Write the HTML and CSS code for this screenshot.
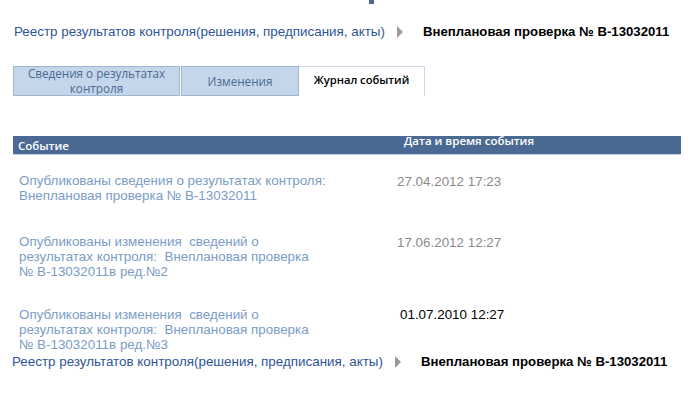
FILE: index.html
```html
<!DOCTYPE html>
<html lang="ru">
<head>
<meta charset="utf-8">
<link rel="stylesheet" href="styles.css">
</head>
<body>
<div class="topmark"></div>
<div class="crumbs crumbs-top">
  <span class="crumb-link">Реестр результатов контроля(решения, предписания, акты)</span>
  <svg class="crumb-arrow" width="6" height="12" viewBox="0 0 6 12"><path d="M0 0 L6 6 L0 12 Z" fill="#9a9a9a"/></svg>
  <span class="crumb-current">Внеплановая проверка № В-13032011</span>
</div>
<div class="tabs">
  <div class="tab tab-1">Сведения о результатах<br>контроля</div>
  <div class="tab tab-2">Изменения</div>
  <div class="tab tab-active">Журнал событий</div>
</div>
<div class="table">
  <div class="thead">
    <div class="th th-event">Событие</div>
    <div class="th th-date">Дата и время события</div>
  </div>
  <div class="row row-1">
    <div class="event">Опубликованы сведения о результатах контроля:<br>Внеплановая проверка № В-13032011</div>
    <div class="date">27.04.2012 17:23</div>
  </div>
  <div class="row row-2">
    <div class="event">Опубликованы изменения&nbsp; сведений о<br>результатах контроля:&nbsp; Внеплановая проверка<br>№ В-13032011в ред.№2</div>
    <div class="date">17.06.2012 12:27</div>
  </div>
  <div class="row row-3">
    <div class="event">Опубликованы изменения&nbsp; сведений о<br>результатах контроля:&nbsp; Внеплановая проверка<br>№ В-13032011в ред.№3</div>
    <div class="date date-dark">01.07.2010 12:27</div>
  </div>
</div>
<div class="crumbs crumbs-bottom">
  <span class="crumb-link">Реестр результатов контроля(решения, предписания, акты)</span>
  <svg class="crumb-arrow" width="6" height="12" viewBox="0 0 6 12"><path d="M0 0 L6 6 L0 12 Z" fill="#9a9a9a"/></svg>
  <span class="crumb-current">Внеплановая проверка № В-13032011</span>
</div>
</body>
</html>
```
FILE: styles.css
```css
html, body {
  margin: 0;
  padding: 0;
  background: #ffffff;
}
body {
  font-family: "Liberation Sans", Arial, sans-serif;
  font-size: 13.4px;
  width: 694px;
  height: 395px;
  overflow: hidden;
}
.topmark {
  width: 5px;
  height: 4px;
  margin-left: 369px;
  background: #4a6a94;
}
.crumbs {
  display: flex;
  align-items: center;
  height: 16px;
  line-height: 16px;
}
.crumbs-top {
  margin-top: 20px;
  padding-left: 14px;
}
.crumbs-bottom {
  margin-top: 2px;
  padding-left: 12px;
}
.crumb-link {
  color: #2f5597;
}
.crumb-arrow {
  margin-left: 12px;
  margin-right: 20px;
}
.crumb-current {
  color: #000000;
  font-weight: bold;
  font-size: 13.2px;
}
.tabs {
  display: flex;
  margin-top: 26px;
  margin-left: 13px;
  font-family: "Open Sans", sans-serif;
  font-size: 11.7px;
}
.tab {
  box-sizing: border-box;
  height: 30px;
  display: flex;
  align-items: center;
  justify-content: center;
  text-align: center;
  line-height: 16px;
}
.tab-1, .tab-2 {
  background: #c6d6ea;
  border: 1px solid #9fb6d2;
  color: #4a6a94;
}
.tab-1 {
  width: 167px;
  line-height: 15px;
  overflow: hidden;
}
.tab-2 {
  width: 118px;
  margin-left: 1px;
}
.tab-active {
  width: 126px;
  background: #ffffff;
  border-top: 1px solid #c9d6e6;
  border-right: 1px solid #c9d6e6;
  color: #000000;
  font-weight: 600;
  font-size: 11.2px;
  padding-bottom: 3px;
}
.table {
  margin-top: 40px;
  margin-left: 13px;
  width: 668px;
}
.thead {
  display: flex;
  height: 18px;
  background: #4a6a94;
  border-bottom: 1px solid #c8d2e0;
  color: #ffffff;
  font-family: "Open Sans", sans-serif;
  font-size: 11.5px;
  font-weight: 600;
}
.th-event {
  width: 386px;
  padding-left: 5px;
  padding-top: 3px;
  line-height: 14px;
}
.th-date {
  line-height: 14px;
  margin-top: -2px;
}
.row {
  display: flex;
  padding-left: 6px;
  line-height: 15px;
  color: #7b9cc6;
}
.row-1 { margin-top: 18px; }
.row-2 { margin-top: 31px; }
.row-3 { margin-top: 28px; }
.event {
  width: 378px;
}
.date {
  color: #8a8a8a;
  padding-top: 1px;
}
.date-dark {
  color: #000000;
  margin-left: 3px;
  padding-top: 0;
}
```
